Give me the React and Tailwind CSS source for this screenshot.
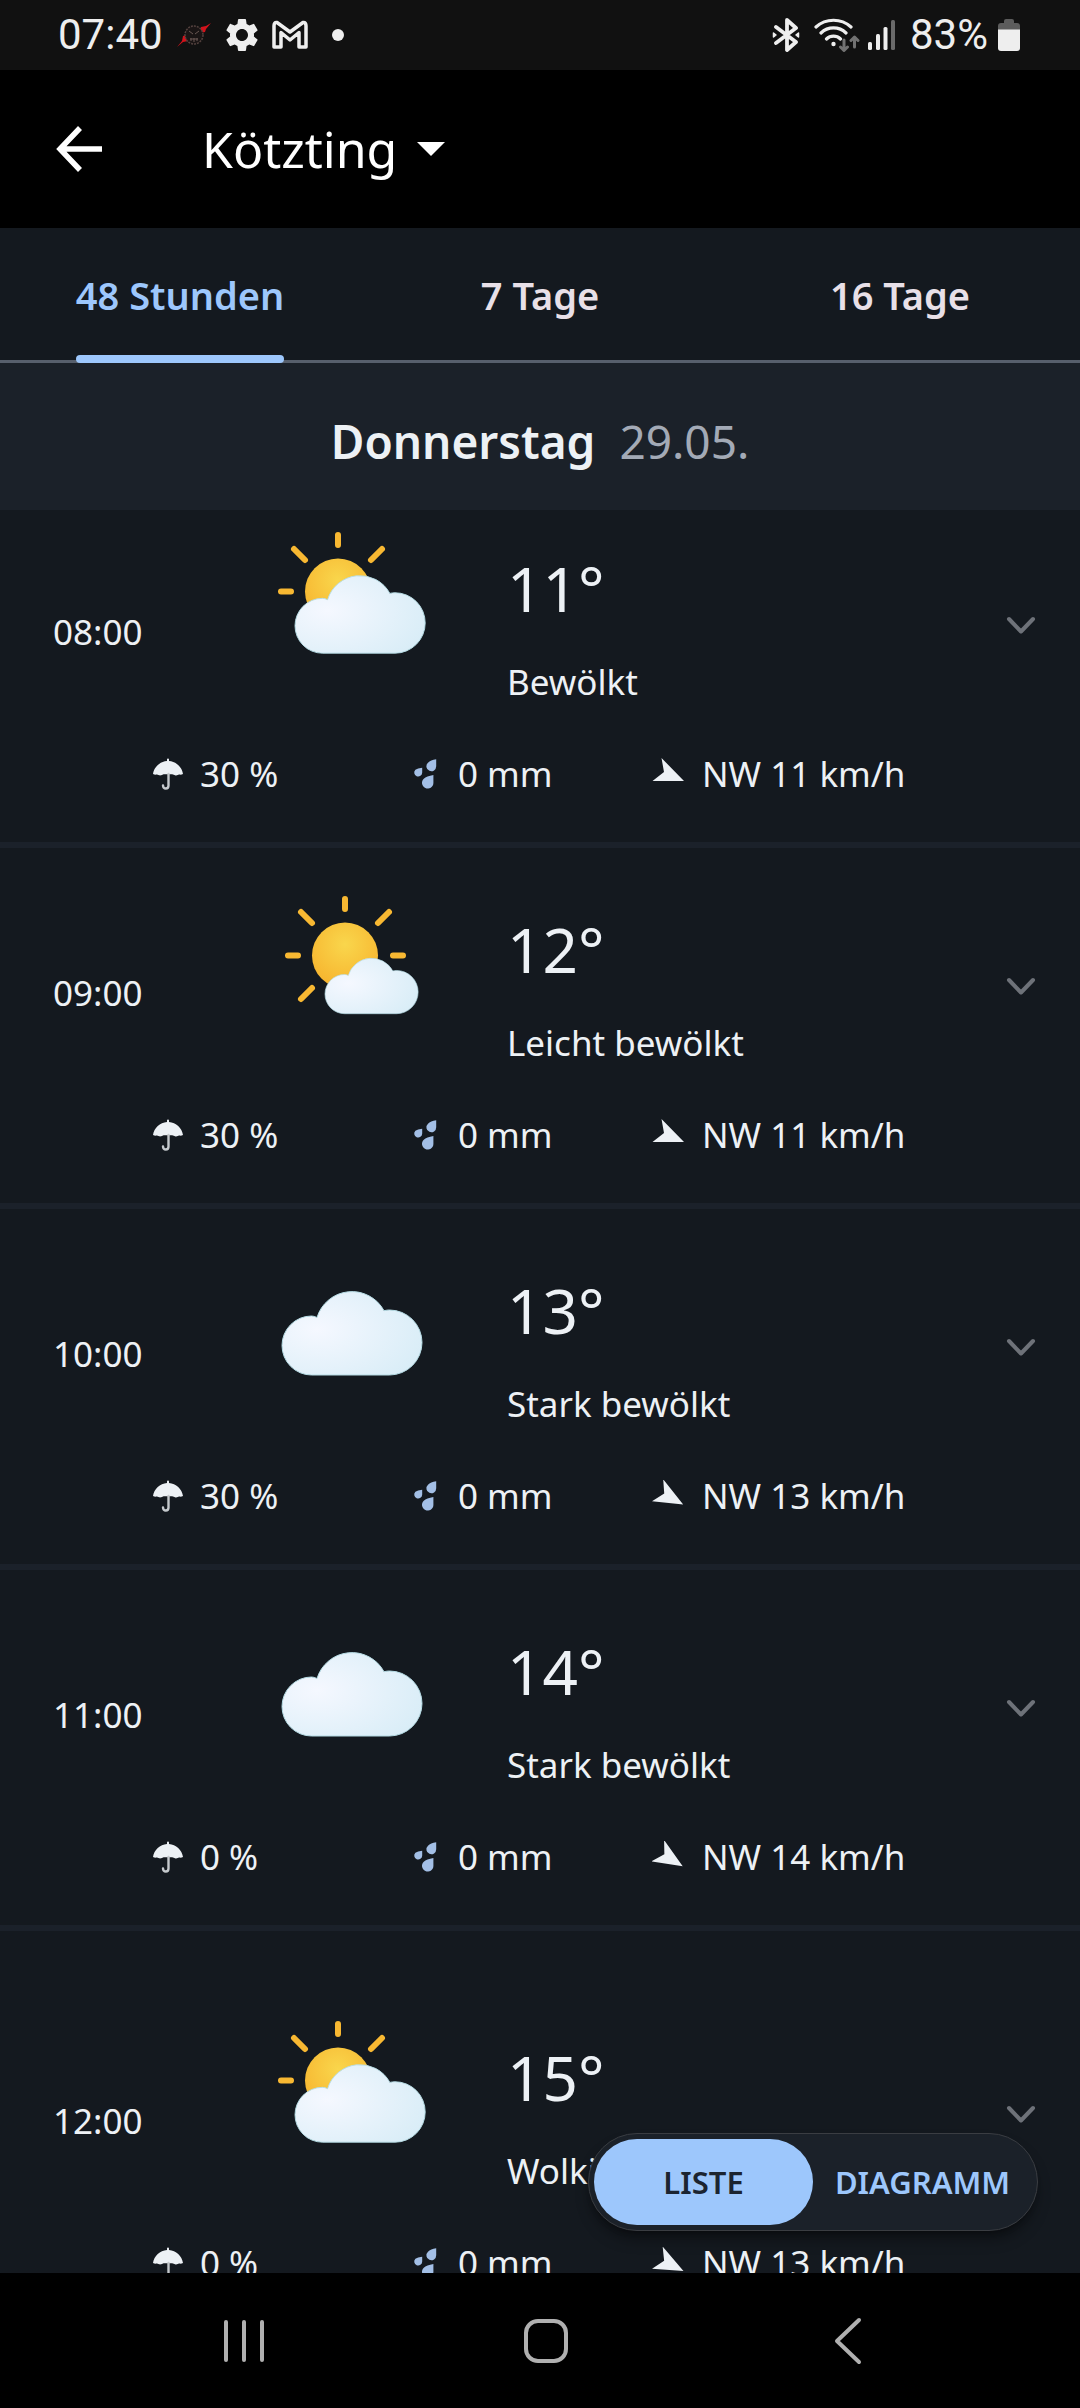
import { useState } from 'react';
import { MdSettings } from 'react-icons/md';

const tabs = ['48 Stunden', '7 Tage', '16 Tage'];
const views = ['LISTE', 'DIAGRAMM'];

const hours = [
  { time: '08:00', temp: '11°', text: 'Bewölkt', icon: 'cloudy', rain: '30 %', amount: '0 mm', wind: 'NW 11 km/h', angle: 0 },
  { time: '09:00', temp: '12°', text: 'Leicht bewölkt', icon: 'light', rain: '30 %', amount: '0 mm', wind: 'NW 11 km/h', angle: 0 },
  { time: '10:00', temp: '13°', text: 'Stark bewölkt', icon: 'overcast', rain: '30 %', amount: '0 mm', wind: 'NW 13 km/h', angle: 6 },
  { time: '11:00', temp: '14°', text: 'Stark bewölkt', icon: 'overcast', rain: '0 %', amount: '0 mm', wind: 'NW 14 km/h', angle: 9 },
  { time: '12:00', temp: '15°', text: 'Wolkig', icon: 'cloudy', rain: '0 %', amount: '0 mm', wind: 'NW 13 km/h', angle: 4 },
];

const CLOUD = 'M29.5 83A29.5 29.5 0 0 1 29.5 24Q32 24 35 25.500A36.5 36.5 0 0 1 102 18.700Q105 18 107.500 18A32.5 32.5 0 0 1 107.500 83Z';

// gradients shared by all weather icons
function Gradients() {
  return (
    <svg width="0" height="0" className="absolute" aria-hidden="true">
      <defs>
        <radialGradient id="sun" cx="0.5" cy="0.33" r="0.65">
          <stop offset="0" stopColor="#f9d64c" />
          <stop offset="1" stopColor="#f7b52f" />
        </radialGradient>
        <radialGradient id="cloud" cx="0.25" cy="0.45" r="0.8">
          <stop offset="0" stopColor="#f5f8ff" />
          <stop offset="1" stopColor="#d9edf7" />
        </radialGradient>
      </defs>
    </svg>
  );
}

function WeatherIcon({ type }) {
  return (
    <svg viewBox="0 0 160 160" className="size-40" aria-hidden="true">
      {type === 'cloudy' && (
        <>
          <path d="M72 17v10M28 31l11 11M116 31l-11 11M15 73.500h10" stroke="#f8b832" strokeWidth="6" strokeLinecap="round" />
          <circle cx="72" cy="73.500" r="33" fill="url(#sun)" />
          <path transform="translate(29 58) scale(0.93)" d={CLOUD} fill="url(#cloud)" stroke="#b5dbe4" />
        </>
      )}
      {type === 'light' && (
        <>
          <path d="M79 20v10M35 33l11 11M123 33l-11 11M22 76.500h10M127 76.500h10M35 120l11-11" stroke="#f8b832" strokeWidth="6" strokeLinecap="round" />
          <circle cx="79" cy="76.500" r="33" fill="url(#sun)" />
          <path transform="translate(59 79.500) scale(0.665)" d={CLOUD} fill="url(#cloud)" stroke="#b5dbe4" />
        </>
      )}
      {type === 'overcast' && (
        <path transform="translate(16 52)" d={CLOUD} fill="url(#cloud)" stroke="#b5dbe4" />
      )}
    </svg>
  );
}

function Umbrella() {
  return (
    <svg viewBox="0 0 32 32" className="size-8 shrink-0" aria-hidden="true">
      <path d="M1 16C2 9 8 3.500 15 3V1.500a1 1 0 0 1 2 0V3c7 .5 13 6 14 13-2 1-3 .5-4 .5s-2 1.500-4 .8-2.500-1-3.500-1H12.500c-1 0-2 .5-3.500 1s-3-.8-4-.8-2 .5-4-.5Z" fill="#edf1f5" />
      <path d="M16.500 16v11.500q0 3-2.700 3t-2.800-3" fill="none" stroke="#c5c9cd" strokeWidth="2.400" strokeLinecap="round" />
    </svg>
  );
}

function Drops() {
  return (
    <svg viewBox="0 0 32 32" className="size-8 shrink-0" aria-hidden="true">
      <g fill="#a3bfe6">
        <path d="M26.200 1.300V8.200A4.900 4.900 0 1 1 18 4.700Q20.500 2.300 26.200 1.300Z" />
        <path d="M12.200 9.700V14.500A4 4 0 1 1 5.400 11.700Q7.500 10.200 12.200 9.700Z" />
        <path d="M23.400 17V25A5.700 5.700 0 1 1 13.800 20.700Q16.500 18.200 23.400 17Z" />
      </g>
    </svg>
  );
}

function WindArrow({ angle }) {
  return (
    <svg viewBox="0 0 32 32" className="size-8 shrink-0" aria-hidden="true">
      <path transform={`rotate(${angle} 17 16)`} d="M9.500 0L32 23H0.500L12 14Z" fill="#edf1f5" />
    </svg>
  );
}

function StatusBar() {
  return (
    <div className="flex h-[70px] shrink-0 items-center justify-between bg-[#111111] pr-[60px] pl-[58px] font-['Roboto',sans-serif] text-[42px] leading-none text-[#eeeeee]">
      <div className="flex items-center">
        <span>07:40</span>
        <svg viewBox="0 0 34 24" className="ml-3.5 h-6 w-[34px]" aria-hidden="true">
          <path d="M34 0l-5 6-1 3-5 1 1-6 5-1ZM0 24l6-5 5-1-1-6-4 1-1 5Z" fill="#d3121b" />
          <circle cx="17" cy="12" r="9" fill="#1a1515" stroke="#54423f" strokeWidth="1.500" strokeDasharray="2 1" />
          <path d="M12 8l4 3M22 8l-4 3M13 16h8M14 18v-3M17 19v-4M20 18v-3" stroke="#6b5954" fill="none" />
        </svg>
        <MdSettings className="ml-[11px] size-10" />
        <svg viewBox="0 0 36 30" className="ml-2.5 h-[30px] w-9" fill="none" stroke="currentColor" strokeWidth="3.500" strokeLinejoin="round" aria-hidden="true">
          <path d="M2 27V6Q2 2 5 2.500L18 12 31 2.500Q34 2 34 6V27H27V12.500L18 20 9 12.500V27Z" />
        </svg>
        <span className="ml-6 size-3 rounded-full bg-[#eeeeee]" />
      </div>
      <div className="flex items-center">
        <svg viewBox="0 0 28 34" className="h-[34px] w-7" fill="none" stroke="currentColor" strokeWidth="3.800" strokeLinecap="round" strokeLinejoin="round" aria-hidden="true">
          <path d="M4 9l20 15-9 8V2l9 8L4 25" />
          <path d="M1.500 15v4l2.500-2ZM26.500 15v4l-2.500-2Z" strokeWidth="1.500" fill="currentColor" />
        </svg>
        <svg viewBox="0 0 46 34" className="ml-3.5 h-[34px] w-[46px]" fill="none" strokeWidth="3.200" strokeLinecap="round" strokeLinejoin="round" aria-hidden="true">
          <path d="M2 9a26 26 0 0 1 35 0M7 15a18 18 0 0 1 25 0M12.500 21a10 10 0 0 1 14 0" stroke="#eeeeee" />
          <circle cx="19.500" cy="26" r="2.200" fill="#eeeeee" />
          <path d="M30 22v10M26.500 29l3.500 3.500 3.500-3.500M40.500 29V19M37 22.500l3.500-3.500 3.500 3.500" stroke="#727272" strokeWidth="3" />
        </svg>
        <svg viewBox="0 0 28 30" className="ml-2 h-[30px] w-7" aria-hidden="true">
          <g fill="#eeeeee">
            <rect x="0" y="22" width="4" height="8" rx="1.500" />
            <rect x="8" y="14" width="4" height="16" rx="1.500" />
            <rect x="15.500" y="7" width="4" height="23" rx="1.500" />
          </g>
          <rect x="23" y="0" width="4" height="30" rx="1.500" fill="#6a6a6a" />
        </svg>
        <span className="ml-3.5">83%</span>
        <svg viewBox="0 0 22 32" className="ml-2.5 h-8 w-[22px]" aria-hidden="true">
          <path d="M6 4V2q0-2 2-2h6q2 0 2 2v2h3q3 0 3 3v4H0V7q0-3 3-3Z" fill="#5c5c5c" />
          <path d="M0 10.500H22V29q0 3-3 3H3q-3 0-3-3Z" fill="#eeeeee" />
        </svg>
      </div>
    </div>
  );
}

function HourRow({ hour, first, last }) {
  return (
    <li className={`border-b-6 border-[#1b212a] ${first ? 'pt-0' : last ? 'pt-[68px]' : 'pt-[23px]'}`}>
      <div className="flex h-[220px]">
        <div className="w-[266px] shrink-0 pt-[98px] pl-[53px] leading-[48px]">{hour.time}</div>
        <div className="w-[241px] shrink-0 pt-2">
          <WeatherIcon type={hour.icon} />
        </div>
        <div className="flex-1 pt-[38px]">
          <div className="text-[62px] leading-[80px]">{hour.temp}</div>
          <div className="mt-[30px] leading-[48px]">{hour.text}</div>
        </div>
        <button aria-label="Details" className="mr-10 self-start pt-24">
          <svg viewBox="0 0 38 38" className="size-[38px]" fill="none" stroke="#6e7279" strokeWidth="4" strokeLinecap="round" strokeLinejoin="round">
            <path d="M7 13l12 12.500 12-12.500" />
          </svg>
        </button>
      </div>
      <div className="flex h-28 items-start pt-5 pl-[152px] leading-[48px]">
        <span className="flex w-[258px] items-center gap-4"><Umbrella />{hour.rain}</span>
        <span className="flex w-[242px] items-center gap-4"><Drops />{hour.amount}</span>
        <span className="flex items-center gap-[18px]"><WindArrow angle={hour.angle} />{hour.wind}</span>
      </div>
    </li>
  );
}

function ViewToggle() {
  const [view, setView] = useState('LISTE');

  return (
    <div className="absolute right-[42px] bottom-[42px] flex rounded-full border border-[#3a3d42] bg-[#1b2129] p-[5px] shadow-lg shadow-black/40">
      {views.map((v) => (
        <button
          key={v}
          onClick={() => setView(v)}
          className={`h-[86px] w-[219px] rounded-full text-[31px] font-semibold ${
            view === v ? 'bg-[#9dc7fc] text-[#1b2430]' : 'text-[#9dc7fc]'
          }`}
        >
          {v}
        </button>
      ))}
    </div>
  );
}

export default function App() {
  const [active, setActive] = useState(0);

  return (
    <div className="flex h-screen flex-col overflow-hidden bg-[#14191f] font-['Noto_Sans',sans-serif] text-[35px] text-[#edf1f5]">
      <Gradients />
      <StatusBar />

      <header className="flex h-[158px] shrink-0 items-center bg-black pl-[54px] text-white">
        <button aria-label="Zurück">
          <svg viewBox="0 0 48 48" className="size-12" fill="none" stroke="currentColor" strokeWidth="5.500">
            <path d="M26 3L6 24l20 21M6 24h42" />
          </svg>
        </button>
        <button className="ml-[100px] flex items-center gap-5 text-[50px]">
          Kötzting
          <svg viewBox="0 0 28 14" className="h-3.5 w-7" fill="currentColor" aria-hidden="true">
            <path d="M0 0h28L14 14Z" />
          </svg>
        </button>
      </header>

      <nav className="grid h-[135px] shrink-0 grid-cols-3 border-b-3 border-[#575f6c]">
        {tabs.map((tab, i) => (
          <button
            key={tab}
            onClick={() => setActive(i)}
            className={`flex justify-center text-[38px] font-semibold ${active === i ? 'text-[#9dc7fc]' : 'text-[#e8e0e8]'}`}
          >
            <span className="relative flex h-full items-center pt-0.5">
              {tab}
              {active === i && <span className="absolute inset-x-0 -bottom-[3px] h-2 rounded-sm bg-[#9dc7fc]" />}
            </span>
          </button>
        ))}
      </nav>

      <h2 className="flex h-[147px] shrink-0 items-center justify-center gap-6 bg-[#1b2129] pt-2.5 text-[46px] font-semibold">
        Donnerstag <span className="font-normal text-[#a3aab6]">29.05.</span>
      </h2>

      <div className="relative min-h-0 flex-1">
        <main className="h-full overflow-hidden">
          <ul>
            {hours.map((hour, i) => (
              <HourRow key={hour.time} hour={hour} first={i === 0} last={i === hours.length - 1} />
            ))}
          </ul>
        </main>
        <ViewToggle />
      </div>

      <footer className="flex h-[135px] shrink-0 items-center justify-center bg-black pl-3 text-[#b0b0b0]">
        <button aria-label="Letzte Apps" className="flex w-[302px] justify-center">
          <svg viewBox="0 0 48 48" className="size-12" stroke="currentColor" strokeWidth="4" strokeLinecap="round">
            <path d="M6 5v38M24 5v38M42 5v38" />
          </svg>
        </button>
        <button aria-label="Startseite" className="flex w-[302px] justify-center">
          <svg viewBox="0 0 48 48" className="size-12" fill="none" stroke="currentColor" strokeWidth="4">
            <rect x="4" y="4" width="40" height="40" rx="12" />
          </svg>
        </button>
        <button aria-label="Zurück" className="flex w-[302px] justify-center">
          <svg viewBox="0 0 48 48" className="size-12" fill="none" stroke="currentColor" strokeWidth="4" strokeLinecap="round" strokeLinejoin="round">
            <path d="M35 3L13 24l22 21" />
          </svg>
        </button>
      </footer>
    </div>
  );
}
